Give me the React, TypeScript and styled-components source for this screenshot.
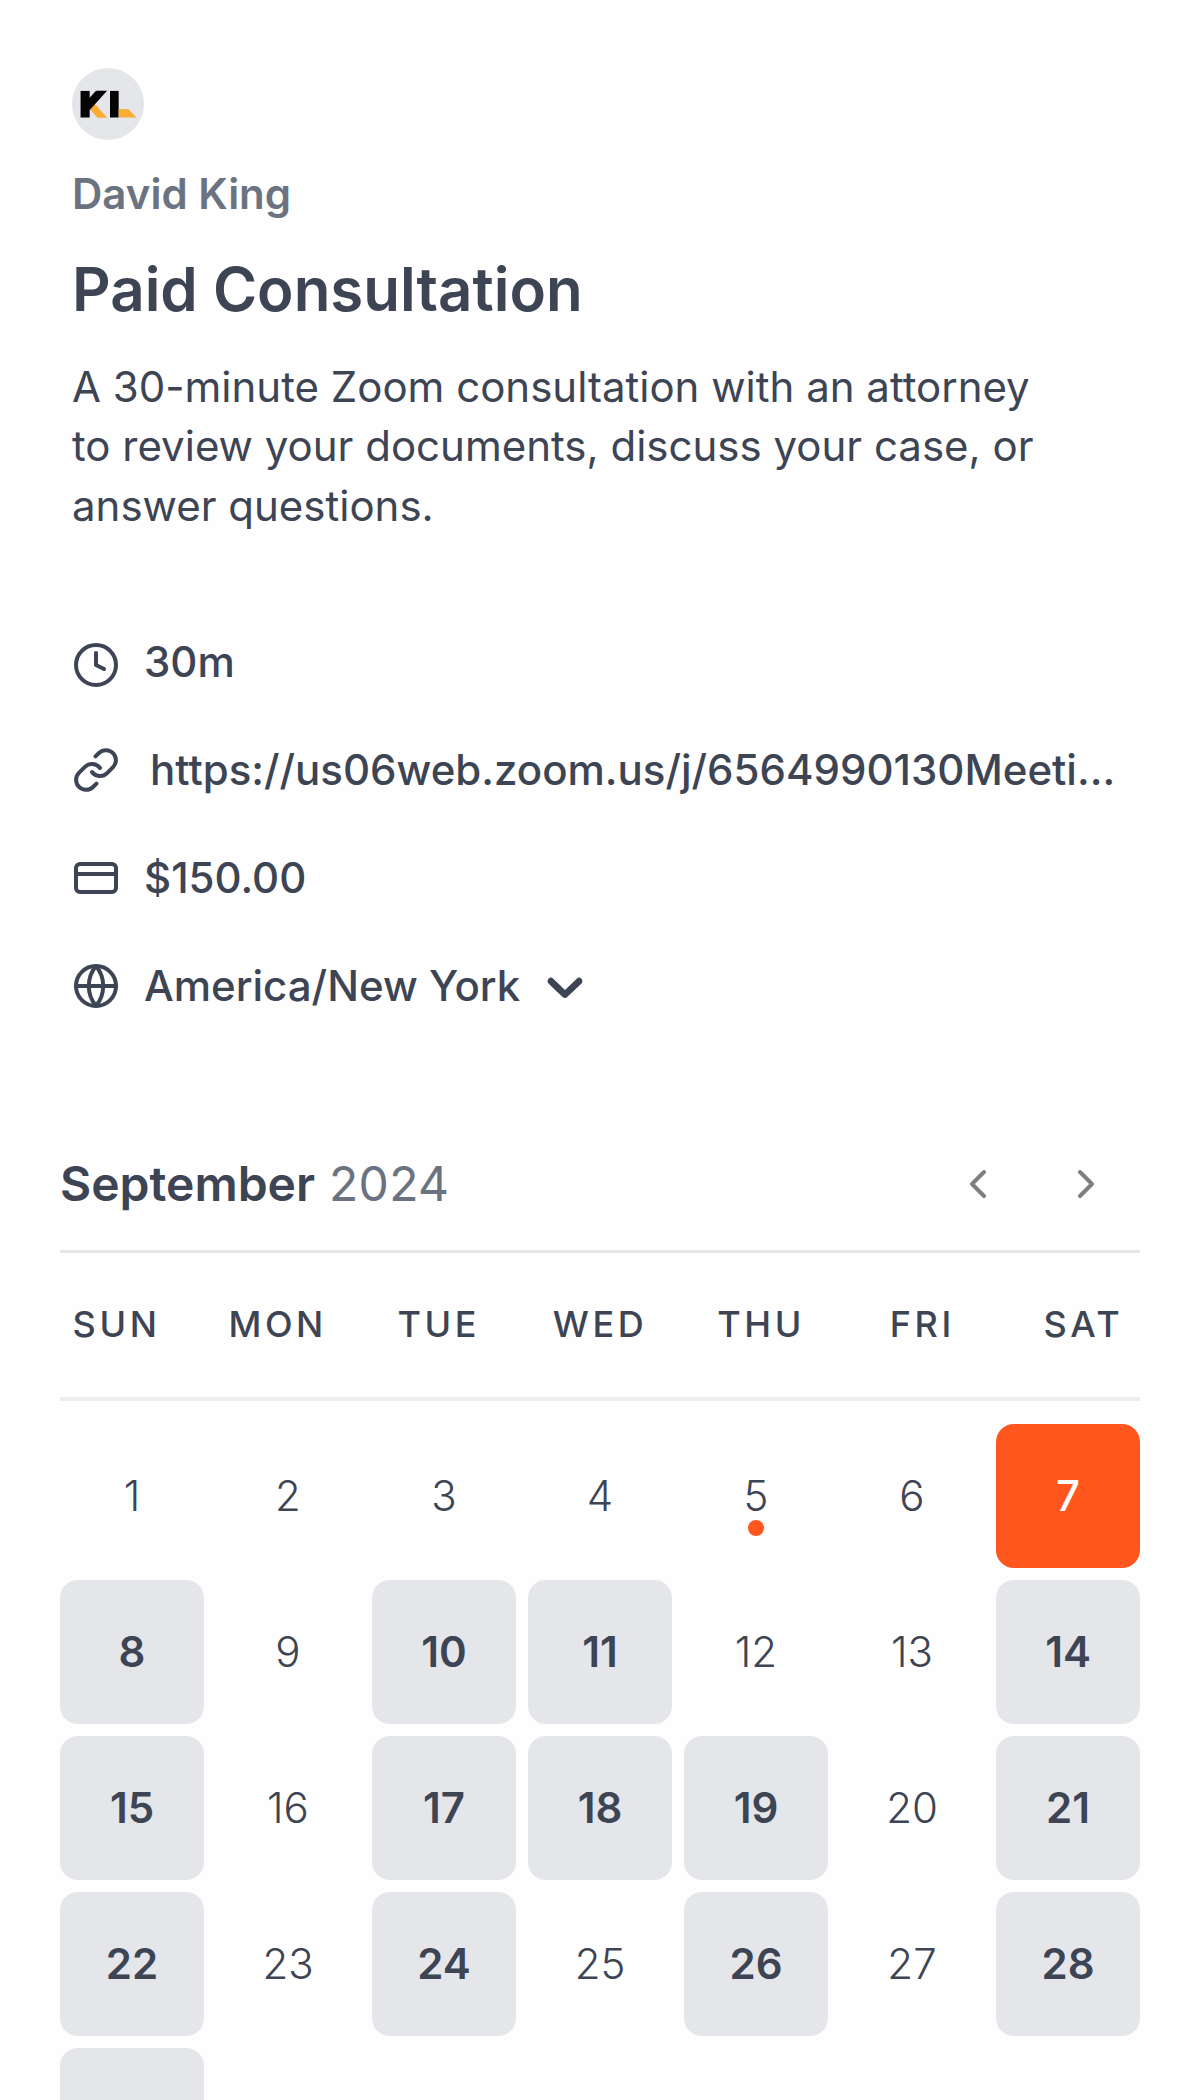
import React from "react";
import styled, { createGlobalStyle, css } from "styled-components";

const ink = "#3d4454";
const muted = "#6b7280";
const accent = "#ff561d";
const cellFill = "#e4e6ea";

const GlobalStyle = createGlobalStyle`
  html, body { margin: 0; padding: 0; background: #fefefe; }
  body { height: 2100px; overflow: hidden; }
  * { box-sizing: border-box; }
`;

const Page = styled.main`
  width: 1200px;
  height: 2100px;
  overflow: hidden;
  padding: 68px 60px 0;
  display: flex;
  flex-direction: column;
  font-family: Inter, "Liberation Sans", sans-serif;
  font-size: 42px;
  color: ${ink};
`;

const EventInfo = styled.section`
  display: flex;
  flex-direction: column;
  padding: 0 12px;
`;

const Avatar = styled.div`
  width: 72px;
  height: 72px;
  border-radius: 50%;
  overflow: hidden;
  background: ${cellFill};
  svg { display: block; }
`;

const Host = styled.p`
  margin: 24px 0 0;
  line-height: 60px;
  font-weight: 600;
  color: ${muted};
`;

const Title = styled.h1`
  margin: 29px 0 0;
  font-size: 60px;
  line-height: 72px;
  font-weight: 600;
`;

const Description = styled.p`
  margin: 31.6px 0 0;
  line-height: 59.5px;
  font-weight: 400;
  white-space: nowrap;
`;

const Details = styled.ul`
  list-style: none;
  margin: 96.9px 0 0;
  padding: 0;
  display: flex;
  flex-direction: column;
  gap: 48px;
`;

const Detail = styled.li`
  display: flex;
  align-items: center;
  height: 60px;
  line-height: 60px;
  font-weight: 500;
  white-space: nowrap;
`;

const DetailIcon = styled.span<{ $drop?: number }>`
  display: flex;
  flex: none;
  padding-top: ${(p) => (p.$drop ?? 0) * 2}px;
  margin: 0 24.4px 0 -0.4px;
`;

const LinkText = styled.span`
  padding: 1px 0 0 6px;
`;

const ZoneText = styled.span`
  padding-top: 1px;
`;

const Caret = styled.svg`
  flex: none;
  margin: 1px 0 0 15px;
`;

const Calendar = styled.section`
  display: flex;
  flex-direction: column;
  margin-top: 131.5px;
`;

const MonthBar = styled.header`
  display: flex;
  align-items: center;
  justify-content: space-between;
  height: 72px;
  padding-right: 30.5px;
  margin-bottom: 30.5px;
`;

const Month = styled.h2`
  display: flex;
  gap: 14px;
  margin: 0;
  font-size: 48px;
  line-height: 73px;
  font-weight: 600;
  span { font-weight: 400; letter-spacing: 0.3px; color: ${muted}; }
`;

const MonthNav = styled.nav`
  display: flex;
  gap: 60px;
  padding-top: 1px;
`;

const NavButton = styled.button`
  display: flex;
  padding: 0;
  border: 0;
  background: none;
  color: #7c7e84;
`;

const Weekdays = styled.div`
  display: grid;
  grid-template-columns: repeat(7, 1fr);
  column-gap: 48px;
  height: 151px;
  border-top: 3px solid #e6e6e7;
  border-bottom: 4px solid #ededee;
`;

const Weekday = styled.div`
  display: flex;
  justify-content: center;
  font-size: 36px;
  line-height: 143px;
  font-weight: 500;
  letter-spacing: 3.6px;
`;

const Days = styled.div`
  display: grid;
  grid-template-columns: repeat(7, 144px);
  grid-auto-rows: 144px;
  gap: 12px;
  margin-top: 23px;
`;

type DayState = "idle" | "open" | "selected";

const Day = styled.button<{ $state: DayState }>`
  position: relative;
  display: flex;
  align-items: center;
  justify-content: center;
  padding: 0 0 1px;
  border: 0;
  border-radius: 18px;
  background: transparent;
  font: inherit;
  font-weight: 300;
  color: ${ink};
  ${(p) => p.$state === "open" && css`
    background: ${cellFill};
    font-weight: 600;
  `}
  ${(p) => p.$state === "selected" && css`
    background: ${accent};
    color: #fff;
    font-weight: 500;
  `}
`;

const TodayDot = styled.i`
  position: absolute;
  left: 64px;
  top: 96px;
  width: 16px;
  height: 16px;
  border-radius: 50%;
  background: ${accent};
`;

type IconProps = { children: React.ReactNode };

const Icon = ({ children }: IconProps) => (
  <svg width="48" height="48" viewBox="0 0 24 24" fill="none" stroke="currentColor"
    strokeWidth="2" strokeLinecap="round" strokeLinejoin="round">
    {children}
  </svg>
);

const Logo = () => (
  <svg width="72" height="72" viewBox="66 54 216 216">
    <svg x="91" y="122" width="172" height="81" viewBox="91 122 172 81">
      <line x1="122" y1="164" x2="164" y2="211" stroke="#fbad35" strokeWidth="22" />
      <line x1="164" y1="112" x2="110" y2="172" stroke="#050505" strokeWidth="25" />
      <rect x="91" y="122" width="28" height="81" fill="#050505" />
      <rect x="180" y="122" width="26" height="81" fill="#050505" />
      <rect x="206" y="178" width="26" height="25" fill="#fbad35" />
      <rect x="0" y="0" width="28" height="25" fill="#fbad35" transform="translate(208 178) skewX(44)" />
    </svg>
  </svg>
);

const weekdays = ["SUN", "MON", "TUE", "WED", "THU", "FRI", "SAT"];
const openDays = new Set([8, 10, 11, 14, 15, 17, 18, 19, 21, 22, 24, 26, 28, 29]);
const selectedDay = 7;
const today = 5;
const lastLabelledDay = 28;

const stateOf = (day: number): DayState =>
  day === selectedDay ? "selected" : openDays.has(day) ? "open" : "idle";

export default function App() {
  return (
    <>
      <GlobalStyle />
      <Page>
        <EventInfo>
          <Avatar><Logo /></Avatar>
          <Host>David King</Host>
          <Title>Paid Consultation</Title>
          <Description>
            A 30-minute Zoom consultation with an attorney<br />
            to review your documents, discuss your case, or<br />
            answer questions.
          </Description>
          <Details>
            <Detail>
              <DetailIcon $drop={3.5}>
                <Icon><circle cx="12" cy="12" r="10" /><path d="M12 6v6l4 2" /></Icon>
              </DetailIcon>
              30m
            </Detail>
            <Detail>
              <DetailIcon>
                <Icon>
                  <path d="M10 13a5 5 0 0 0 7.54.54l3-3a5 5 0 0 0-7.07-7.07l-1.72 1.71" />
                  <path d="M14 11a5 5 0 0 0-7.54-.54l-3 3a5 5 0 0 0 7.07 7.07l1.71-1.71" />
                </Icon>
              </DetailIcon>
              <LinkText>https://us06web.zoom.us/j/6564990130Meeti…</LinkText>
            </Detail>
            <Detail>
              <DetailIcon>
                <Icon><rect x="2" y="5" width="20" height="14" rx="2" /><path d="M2 10h20" /></Icon>
              </DetailIcon>
              $150.00
            </Detail>
            <Detail>
              <DetailIcon>
                <Icon>
                  <circle cx="12" cy="12" r="10" />
                  <path d="M12 2a15.7 15.7 0 0 0 0 20 15.7 15.7 0 0 0 0-20" />
                  <path d="M2 12h20" />
                </Icon>
              </DetailIcon>
              <ZoneText>America/New York</ZoneText>
              <Caret width="60" height="60" viewBox="0 0 20 20" fill="currentColor">
                <path d="M4.516 7.548c0.436-0.446 1.043-0.481 1.576 0l3.908 3.747 3.908-3.747c0.533-0.481 1.141-0.446 1.574 0 0.436 0.445 0.408 1.197 0 1.615-0.406 0.418-4.695 4.502-4.695 4.502-0.217 0.223-0.502 0.335-0.787 0.335s-0.57-0.112-0.789-0.335c0 0-4.287-4.084-4.695-4.502s-0.436-1.17 0-1.615z" />
              </Caret>
            </Detail>
          </Details>
        </EventInfo>
        <Calendar>
          <MonthBar>
            <Month>September <span>2024</span></Month>
            <MonthNav>
              <NavButton aria-label="Previous month"><Icon><path d="m15 18-6-6 6-6" /></Icon></NavButton>
              <NavButton aria-label="Next month"><Icon><path d="m9 18 6-6-6-6" /></Icon></NavButton>
            </MonthNav>
          </MonthBar>
          <Weekdays>
            {weekdays.map((name) => <Weekday key={name}>{name}</Weekday>)}
          </Weekdays>
          <Days>
            {Array.from({ length: 29 }, (_, i) => i + 1).map((day) => (
              <Day key={day} $state={stateOf(day)}>
                {day <= lastLabelledDay && day}
                {day === today && <TodayDot />}
              </Day>
            ))}
          </Days>
        </Calendar>
      </Page>
    </>
  );
}
